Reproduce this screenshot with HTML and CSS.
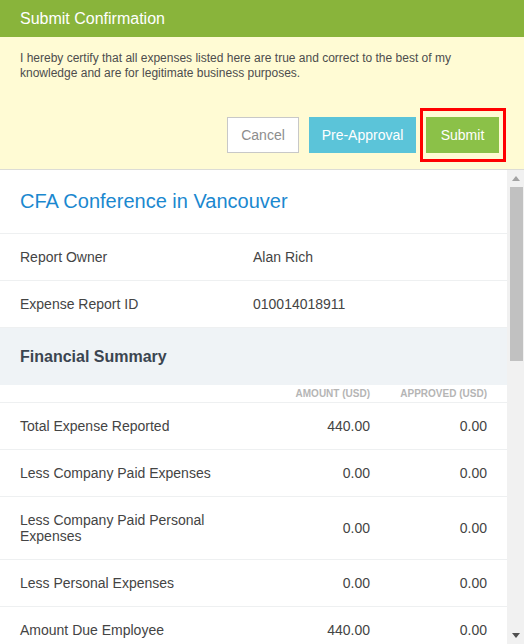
FILE: index.html
```html
<!DOCTYPE html>
<html lang="en">
<head>
<meta charset="utf-8">
<title>Submit Confirmation</title>
<link rel="stylesheet" href="styles.css">
</head>
<body>
<div class="dialog">
  <header class="dialog-header">Submit Confirmation</header>
  <section class="notice">
    <p class="notice-text">I hereby certify that all expenses listed here are true and correct to the best of my knowledge and are for legitimate business purposes.</p>
    <div class="actions">
      <button class="btn btn-cancel">Cancel</button>
      <button class="btn btn-pre">Pre-Approval</button>
      <button class="btn btn-submit">Submit</button>
    </div>
  </section>
  <div class="body-area">
    <main class="content">
      <h1 class="report-title">CFA Conference in Vancouver</h1>
      <div class="field"><span class="field-label">Report Owner</span><span class="field-value">Alan Rich</span></div>
      <div class="field"><span class="field-label">Expense Report ID</span><span class="field-value">010014018911</span></div>

      <h2 class="section-title">Financial Summary</h2>
      <div class="fin-head"><span></span><span class="num">AMOUNT (USD)</span><span class="num">APPROVED (USD)</span></div>
      <div class="fin-row"><span>Total Expense Reported</span><span class="num">440.00</span><span class="num">0.00</span></div>
      <div class="fin-row"><span>Less Company Paid Expenses</span><span class="num">0.00</span><span class="num">0.00</span></div>
      <div class="fin-row"><span>Less Company Paid Personal Expenses</span><span class="num">0.00</span><span class="num">0.00</span></div>
      <div class="fin-row"><span>Less Personal Expenses</span><span class="num">0.00</span><span class="num">0.00</span></div>
      <div class="fin-row"><span>Amount Due Employee</span><span class="num">440.00</span><span class="num">0.00</span></div>
    </main>
    <div class="scrollbar" aria-hidden="true">
      <div class="sb-btn"><svg width="8" height="5" viewBox="0 0 8 5"><path d="M0 5 L4 0 L8 5 Z" fill="#a3a3a3"/></svg></div>
      <div class="sb-track"><div class="sb-thumb"></div></div>
      <div class="sb-btn"><svg width="8" height="5" viewBox="0 0 8 5"><path d="M0 0 L8 0 L4 5 Z" fill="#505050"/></svg></div>
    </div>
  </div>
</div>
</body>
</html>
```
FILE: styles.css
```css
html, body {
  margin: 0;
  padding: 0;
  height: 100%;
}
body {
  font-family: "Liberation Sans", Arial, sans-serif;
  color: #444;
  background: #fff;
}
.dialog {
  display: flex;
  flex-direction: column;
  height: 644px;
  width: 524px;
  overflow: hidden;
}
.dialog-header {
  flex: none;
  height: 37px;
  line-height: 37px;
  background: #89b43b;
  color: #fff;
  font-size: 16px;
  padding: 0 20px;
}
.notice {
  flex: none;
  background: #fffbd4;
  padding: 14px 25px 16px 20px;
  border-bottom: 1px solid #dcdcd6;
}
.notice-text {
  margin: 0;
  font-size: 12px;
  line-height: 15px;
  color: #4d4d4d;
}
.actions {
  display: flex;
  justify-content: flex-end;
  gap: 10px;
  margin-top: 36px;
}
.btn {
  position: relative;
  height: 36px;
  font-family: "Liberation Sans", Arial, sans-serif;
  font-size: 14px;
  border: none;
  padding: 0;
  cursor: pointer;
}
.btn-cancel {
  width: 72px;
  background: #fff;
  color: #8d8d8d;
  border: 1px solid #c8c8c8;
}
.btn-pre {
  width: 107px;
  background: #5bc4d9;
  color: #fff;
}
.btn-submit {
  width: 73px;
  background: #8bc148;
  color: #fff;
}
.btn-submit::after {
  content: "";
  position: absolute;
  top: -9px;
  bottom: -9px;
  left: -6px;
  right: -7px;
  border: 3px solid #f00;
}
.body-area {
  flex: 1;
  min-height: 0;
  display: flex;
}
.content {
  flex: 1;
  min-width: 0;
  overflow: hidden;
}
.scrollbar {
  flex: none;
  width: 17px;
  display: flex;
  flex-direction: column;
  background: #f1f1f1;
}
.sb-btn {
  flex: none;
  height: 17px;
  display: flex;
  align-items: center;
  justify-content: center;
}
.sb-btn svg {
  display: block;
}
.sb-track {
  flex: 1;
}
.sb-thumb {
  height: 174px;
  margin: 0 1px 0 3px;
  background: #c1c1c1;
}
.report-title {
  margin: 0;
  padding: 20px 20px 21px;
  font-size: 20px;
  line-height: 22px;
  font-weight: normal;
  color: #1b88cf;
  border-bottom: 1px solid #eef0f1;
}
.field {
  display: grid;
  grid-template-columns: 233px 1fr;
  padding: 15px 20px;
  font-size: 14px;
  line-height: 16px;
  border-bottom: 1px solid #eef0f1;
}
.section-title {
  margin: 0;
  padding: 20px;
  font-size: 16px;
  line-height: 17px;
  font-weight: bold;
  color: #3b4550;
  background: #eff3f6;
}
.fin-head, .fin-row {
  display: grid;
  grid-template-columns: 233px 117px 117px;
  padding: 0 20px;
  border-bottom: 1px solid #eef0f1;
}
.fin-head {
  padding-top: 3px;
  padding-bottom: 3px;
  font-size: 10px;
  line-height: 11px;
  font-weight: bold;
  color: #b5b5b5;
}
.fin-row {
  padding-top: 15px;
  padding-bottom: 15px;
  font-size: 14px;
  line-height: 16px;
  align-items: center;
}
.num {
  text-align: right;
}
```
